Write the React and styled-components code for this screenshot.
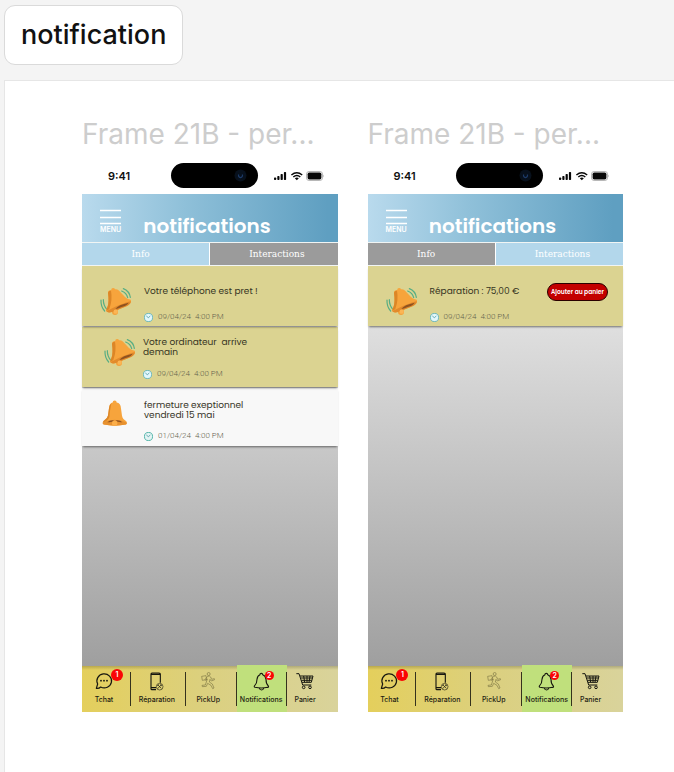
import React from "react";
import styled, { createGlobalStyle } from "styled-components";

const rounded = `"Poppins", "Inter", sans-serif`;

const GlobalStyle = createGlobalStyle`
  * { box-sizing: border-box; }
  body { margin: 0; background: #f4f4f4; font-family: "Inter", sans-serif; }
  button { font: inherit; border: 0; padding: 0; cursor: pointer; }
  h1, h2, h3, p, ul { margin: 0; padding: 0; }
  ul { list-style: none; }
  svg { display: block; }
`;

const Page = styled.div`
  display: flex;
  flex-direction: column;
  align-items: stretch;
  gap: 15px;
  min-height: 100vh;
  padding: 5px 0 0 4px;
`;

const SectionTag = styled.h1`
  align-self: flex-start;
  padding: 12px 16px;
  border: 1px solid #dadada;
  border-radius: 11px;
  background: #fff;
  color: #111;
  font-size: 27px;
  font-weight: 500;
  line-height: 34px;
`;

const Board = styled.main`
  flex: 1;
  display: grid;
  grid-template-columns: repeat(2, minmax(0, 1fr));
  align-items: start;
  gap: 30px;
  padding: 36px 51px 60px 77px;
  border: 1px solid #e6e6e6;
  border-width: 1px 0 0 1px;
  background: #fff;
`;

const FrameLabel = styled.h2`
  color: #cdcdcd;
  font-size: 28px;
  font-weight: 400;
  line-height: 34px;
  white-space: nowrap;
`;

const Screen = styled.article`
  display: flex;
  flex-direction: column;
  margin-top: 8px;
`;

const StatusBar = styled.div`
  display: grid;
  grid-template-columns: 89fr 87px 80fr;
  align-items: center;
  height: 35px;
  padding-bottom: 2px;
`;

const Time = styled.time`
  padding-left: 26px;
  color: #111;
  font-size: 11px;
  font-weight: 600;
  line-height: 14px;
`;

const Island = styled.div`
  display: flex;
  align-items: center;
  justify-content: flex-end;
  height: 25px;
  padding-right: 11px;
  border-radius: 13px;
  background: #000;
`;

const StatusIcons = styled.div`
  display: flex;
  align-items: center;
  justify-content: flex-end;
  padding-right: 13px;
`;

const Header = styled.header`
  display: flex;
  align-items: center;
  gap: 22px;
  height: 48px;
  padding: 6px 18px 0;
  background: linear-gradient(90deg, #b9daed 0%, #8fc0d9 40%, #5f9fc1 96%);
`;

const MenuButton = styled.button`
  display: flex;
  flex-direction: column;
  align-items: center;
  gap: 1px;
  background: none;
  color: #fff;
  font-size: 7px;
  font-weight: 600;
  line-height: 8px;
`;

const Title = styled.h3`
  padding-top: 10px;
  color: #fff;
  font-family: ${rounded};
  font-size: 20px;
  font-weight: 600;
  line-height: 26px;
`;

const Tabs = styled.div`
  display: grid;
  grid-template-columns: 1fr 1fr;
  gap: 1px;
  border: 1px solid #f1f5f4;
  border-width: 1px 0;
`;

const Tab = styled.button`
  height: 22px;
  padding: ${(p) => (p.$first ? "0 10px 0 0" : "0 0 0 6px")};
  background: ${(p) => (p["aria-selected"] ? "#b3d7eb" : "#9b9b9b")};
  color: #fff;
  font-family: "Roboto Slab", "DejaVu Serif", serif;
  font-size: 9px;
  line-height: 12px;
`;

const List = styled.ul`
  display: flex;
  flex-direction: column;
  gap: 1px;
  min-height: 400px;
  background: linear-gradient(#eaeaea, #9f9f9f);
`;

const spacing = {
  short: { padding: "20px 15px 4px 17px", gap: 16, iconColumn: 45 },
  tall: { padding: "10px 15px 8px 21px", gap: 12, iconColumn: 40 },
  read: { padding: "12px 15px 5px 20px", gap: 11, iconColumn: 42 },
};

const Card = styled.li`
  position: relative;
  z-index: ${(p) => p.$level};
  display: flex;
  align-items: flex-start;
  padding: ${(p) => spacing[p.$kind].padding};
  background: ${(p) => (p.$kind === "read" ? "#f8f8f8" : "#dbd391")};
  box-shadow: 0 2px 2px -1px rgba(0, 0, 0, 0.5);
`;

const CardIcon = styled.span`
  flex: none;
  width: ${(p) => spacing[p.$kind].iconColumn}px;
  height: 20px;
`;

const CardText = styled.div`
  flex: 1;
  display: flex;
  flex-direction: column;
  gap: ${(p) => spacing[p.$kind].gap}px;
`;

const Message = styled.p`
  color: #35331f;
  font-family: ${rounded};
  font-size: 9px;
  line-height: 10px;
  white-space: pre-line;
`;

const DateRow = styled.div`
  display: flex;
  align-items: center;
  gap: 5px;
  color: #66634e;
  font-family: "Roboto", sans-serif;
  font-size: 8px;
  font-weight: 300;
  line-height: 10px;
  white-space: pre;
`;

const CartButton = styled.button`
  flex: none;
  height: 18px;
  margin-top: -3px;
  padding: 0 3px;
  border: 1px solid #2a0000;
  border-radius: 9px;
  background: #c30000;
  color: #fff;
  font-family: ${rounded};
  font-size: 6px;
  font-weight: 600;
  line-height: 10px;
  white-space: nowrap;
`;

const Nav = styled.nav`
  background: linear-gradient(#00000030, #00000000 4px),
    linear-gradient(90deg, #e4cf5c, #dbd080 50%, #d9d39b);
`;

const NavList = styled.ul`
  display: grid;
  grid-template-columns: 49fr 55fr 51fr 50fr 51fr;
`;

const NavItem = styled.li`
  margin-top: ${(p) => (p.$active ? "-1px" : 0)};
  padding: ${(p) => (p.$active ? "7px 0 6px" : "6px 0")};
  background: ${(p) => (p.$active ? "#c0e07c" : "transparent")};
`;

const NavLink = styled.a`
  display: flex;
  flex-direction: column;
  align-items: center;
  gap: 3px;
  height: 34px;
  padding-right: ${(p) => p.$inset}px;
  border-right: ${(p) => (p.$last ? 0 : "1px solid #35321d")};
  color: #1d1c12;
  font-family: "Inter", sans-serif;
  font-size: 7px;
  font-weight: 500;
  line-height: 10px;
  text-decoration: none;
`;

const IconSlot = styled.span`
  position: relative;
  display: block;
  height: 20px;
`;

const Badge = styled.span`
  position: absolute;
  top: ${(p) => (p.$small ? -1 : -3)}px;
  left: ${(p) => (p.$small ? 12 : 16)}px;
  width: ${(p) => (p.$small ? 9 : 12)}px;
  height: ${(p) => (p.$small ? 9 : 12)}px;
  border-radius: 50%;
  background: #fa0505;
  color: #fff;
  font-size: 7px;
  font-weight: 600;
  line-height: ${(p) => (p.$small ? 9 : 12)}px;
  text-align: center;
`;

const Bars = () => (
  <svg width="21" height="16" viewBox="0 0 21 16" stroke="#fff" strokeWidth="1.4" aria-hidden="true">
    <path d="M0 1.5H21M0 8.5H21M0 14.5H21" />
  </svg>
);

const Lens = () => (
  <svg width="13" height="13" viewBox="0 0 13 13" fill="none" aria-hidden="true">
    <circle cx="6.5" cy="6.5" r="6" fill="#07101c" />
    <path d="M4.8 5.5a2 2 0 1 0 3.4 0" stroke="#1d3b69" strokeWidth="1.2" />
  </svg>
);

const PhoneStatus = () => (
  <svg width="51" height="12" viewBox="0 0 51 12" fill="#080808" aria-label="Réseau, Wi-Fi, batterie" role="img">
    <rect x="0" y="7.5" width="2.2" height="2.5" rx=".7" />
    <rect x="3.3" y="6" width="2.2" height="4" rx=".7" />
    <rect x="6.6" y="4" width="2.2" height="6" rx=".7" />
    <rect x="9.9" y="2" width="2.2" height="8" rx=".7" />
    <g fill="none" stroke="#080808" strokeWidth="1.5">
      <path d="M17.4 5Q22.8 .5 28.2 5" />
      <path d="M19.3 7Q22.8 4 26.3 7" />
    </g>
    <path d="M20.8 8.3Q22.8 6.9 24.8 8.3L22.8 10.3Z" />
    <rect x="32.5" y="1.5" width="16" height="9" rx="2.6" fill="#fff" stroke="#a5a5a5" strokeWidth=".8" />
    <rect x="33.6" y="2.6" width="13.8" height="6.8" rx="1.7" />
    <path d="M49.4 4.5q1.2 1.5 0 3z" fill="#999" />
  </svg>
);

const RingingBell = () => (
  <svg width="32" height="30" viewBox="66 62 96 90" fill="none" aria-hidden="true">
    <g stroke="#58ae83" strokeWidth="3.6" strokeLinecap="round">
      <path d="M134 77Q149 83 152 97M139 70Q157 77 160 96" />
      <path d="M79 103Q79 121 90 132M72 104Q71 124 83 137" />
    </g>
    <circle cx="114" cy="140" r="9" fill="#f3a23b" />
    <path d="M93 82Q93 74 103 74Q102 69 108 68Q113 68 114 72Q122 70 127 77L144 95Q150 102 161 103Q164 108 161 113L150 122L108 139Q93 144 88 138Q86 134 91 126Q97 112 93 82Z" fill="#f7a43c" />
    <path d="M93 82Q95 75 102 76Q107 103 97 131L88 137Q87 133 91 126Q97 112 93 82Z" fill="#dc8627" />
    <path d="M88 138Q92 144 108 139L150 122Q162 116 161 107Q150 110 127 119Q101 130 88 138Z" fill="#e18a2c" />
    <path d="M115 131Q124 118 155 112Q151 120 134 125Q121 131 115 131Z" fill="#8f5220" />
    <circle cx="116" cy="139" r="6.5" fill="#fbb555" />
  </svg>
);

const StillBell = () => (
  <svg width="26" height="27" viewBox="78 52 78 80" fill="none" aria-hidden="true">
    <path d="M110 59Q110 53 116 53Q122 53 122 59Q134 61 135 77L138 99Q140 110 151 115Q155 122 150 125Q116 132 83 125Q78 121 82 115Q94 108 96 98L99 76Q100 61 110 59Z" fill="#f7a43c" />
    <path d="M106 62Q101 86 100 103Q95 115 82 119Q80 117 83 114Q94 108 96 98L99 76Q100 65 106 62Z" fill="#dc8627" />
    <path d="M80 119Q116 103 152 119Q154 123 150 125Q116 132 83 125Q79 123 80 119Z" fill="#e7912f" />
    <path d="M94 118Q103 110 115 113Q108 120 94 118ZM118 113Q131 110 139 118Q127 120 118 113Z" fill="#8f5220" />
    <circle cx="116" cy="121" r="8" fill="#fbae49" />
  </svg>
);

const Clock = ({ plain }) => (
  <svg width="9" height="9" viewBox="0 0 27 27" fill="none" aria-hidden="true">
    <circle cx="13.5" cy="13.5" r="12.2" fill={plain ? "#e3f4f4" : "#e3f7fb"} stroke={plain ? "#38a99c" : "#58b1bd"} strokeWidth="2.5" />
    <path d="M7 9L13 14L19 9" stroke="#3c8f98" strokeWidth="2.2" />
  </svg>
);

const ChatIcon = () => (
  <svg width="18" height="18" viewBox="0 0 54 54" fill="none" aria-hidden="true">
    <path d="M4 49L8 36A22 21 0 1 1 17 45Q12 50 4 49Z" stroke="#171710" strokeWidth="3.6" strokeLinejoin="round" />
    <g fill="#171710"><circle cx="18" cy="26" r="2.7" /><circle cx="27" cy="26" r="2.7" /><circle cx="36" cy="26" r="2.7" /></g>
  </svg>
);

const RepairIcon = () => (
  <svg width="14" height="19" viewBox="0 0 42 57" fill="none" stroke="#171710" aria-hidden="true">
    <path d="M18 53H6Q3 53 3 50V6Q3 3 6 3H27Q31 3 31 6V32M3 7H31M3 47H18" strokeWidth="3.4" />
    <circle cx="29" cy="44" r="10" strokeWidth="1.8" />
    <path d="M23 50L34 38M24 39L34 49M22 42L26 37M31 38L36 42" strokeWidth="2" />
  </svg>
);

const CourierIcon = () => (
  <svg width="14" height="18" viewBox="0 0 42 54" fill="none" stroke="#77713f" strokeWidth="1.8" strokeLinejoin="round" aria-hidden="true">
    <circle cx="23" cy="6" r="4.5" />
    <path d="M2 13L15 11L17 23L4 25Z" />
    <path d="M20 13Q26 10 29 15L32 22L40 20L41 23L31 27L27 22L25 30L34 36L39 48L35 50L30 40L20 34L16 43L4 44L3 40L13 39L17 27L19 21L14 25L12 22Z" />
  </svg>
);

const BellIcon = () => (
  <svg width="17" height="19" viewBox="0 0 51 57" fill="none" stroke="#171710" strokeWidth="3.3" strokeLinejoin="round" aria-hidden="true">
    <path d="M21 8Q21 4 25 4Q29 4 29 8Q38 11 39 22Q39 36 46 42Q48 46 44 46Q25 50 6 46Q2 45 5 41Q12 35 12 22Q13 11 21 8Z" />
    <path d="M19 48Q20 54 26 54Q31 54 32 48" />
  </svg>
);

const CartIcon = () => (
  <svg width="18" height="18" viewBox="0 0 54 54" fill="none" stroke="#171710" strokeWidth="3" strokeLinejoin="round" aria-hidden="true">
    <path d="M1 5H9L20 39H46M12 12H51L46 31H18M14 18H49M16 25H47M23 12L26 31M33 12V31M42 12L39 31" />
    <circle cx="23" cy="46" r="4" /><circle cx="42" cy="46" r="4" />
  </svg>
);

const navItems = [
  { label: "Tchat", icon: <ChatIcon />, badge: 1, inset: 4 },
  { label: "Réparation", icon: <RepairIcon />, inset: 2 },
  { label: "PickUp", icon: <CourierIcon />, inset: 5 },
  { label: "Notifications", icon: <BellIcon />, badge: 2, active: true, inset: 0 },
  { label: "Panier", icon: <CartIcon />, inset: 14 },
];

const infoCards = [
  { kind: "short", text: "Votre téléphone est pret !", date: "09/04/24  4:00 PM" },
  { kind: "tall", text: "Votre ordinateur\u00a0 arrive\ndemain", date: "09/04/24  4:00 PM" },
  { kind: "read", text: "fermeture exeptionnel\nvendredi 15 mai", date: "01/04/24  4:00 PM" },
];

const interactionCards = [
  { kind: "short", text: "Réparation : 75,00 €", date: "09/04/24  4:00 PM", action: "Ajouter au panier" },
];

function Phone({ selected, cards }) {
  return (
    <section>
      <FrameLabel>Frame 21B - per...</FrameLabel>
      <Screen>
        <StatusBar>
          <Time>9:41</Time>
          <Island><Lens /></Island>
          <StatusIcons><PhoneStatus /></StatusIcons>
        </StatusBar>
        <Header>
          <MenuButton type="button"><Bars />MENU</MenuButton>
          <Title>notifications</Title>
        </Header>
        <Tabs role="tablist">
          {["Info", "Interactions"].map((name, i) => (
            <Tab key={name} type="button" role="tab" $first={i === 0} aria-selected={selected === name}>{name}</Tab>
          ))}
        </Tabs>
        <List>
          {cards.map((card, i) => (
            <Card key={card.text} $kind={card.kind} $level={cards.length - i}>
              <CardIcon $kind={card.kind}>{card.kind === "read" ? <StillBell /> : <RingingBell />}</CardIcon>
              <CardText $kind={card.kind}>
                <Message>{card.text}</Message>
                <DateRow><Clock plain={card.kind === "read"} /><time>{card.date}</time></DateRow>
              </CardText>
              {card.action && <CartButton type="button">{card.action}</CartButton>}
            </Card>
          ))}
        </List>
        <Nav>
          <NavList>
            {navItems.map((item, i) => (
              <NavItem key={item.label} $active={item.active}>
                <NavLink href="#" $inset={item.inset} $last={i === navItems.length - 1}>
                  <IconSlot>
                    {item.icon}
                    {item.badge && <Badge $small={item.active}>{item.badge}</Badge>}
                  </IconSlot>
                  {item.label}
                </NavLink>
              </NavItem>
            ))}
          </NavList>
        </Nav>
      </Screen>
    </section>
  );
}

export default function App() {
  return (
    <>
      <GlobalStyle />
      <Page>
        <SectionTag>notification</SectionTag>
        <Board>
          <Phone selected="Info" cards={infoCards} />
          <Phone selected="Interactions" cards={interactionCards} />
        </Board>
      </Page>
    </>
  );
}
